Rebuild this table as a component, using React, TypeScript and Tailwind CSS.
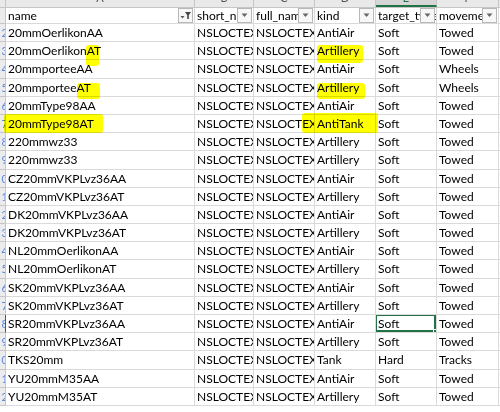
const rows: string[][] = [
  ['20mmOerlikonAA', 'AntiAir', 'Soft', 'Towed'],
  ['20mmOerlikonAT', 'Artillery', 'Soft', 'Towed'],
  ['20mmporteeAA', 'AntiAir', 'Soft', 'Wheels'],
  ['20mmporteeAT', 'Artillery', 'Soft', 'Wheels'],
  ['20mmType98AA', 'AntiAir', 'Soft', 'Towed'],
  ['20mmType98AT', 'AntiTank', 'Soft', 'Towed'],
  ['220mmwz33', 'Artillery', 'Soft', 'Towed'],
  ['220mmwz33', 'Artillery', 'Soft', 'Towed'],
  ['CZ20mmVKPLvz36AA', 'AntiAir', 'Soft', 'Towed'],
  ['CZ20mmVKPLvz36AT', 'Artillery', 'Soft', 'Towed'],
  ['DK20mmVKPLvz36AA', 'AntiAir', 'Soft', 'Towed'],
  ['DK20mmVKPLvz36AT', 'Artillery', 'Soft', 'Towed'],
  ['NL20mmOerlikonAA', 'AntiAir', 'Soft', 'Towed'],
  ['NL20mmOerlikonAT', 'Artillery', 'Soft', 'Towed'],
  ['SK20mmVKPLvz36AA', 'AntiAir', 'Soft', 'Towed'],
  ['SK20mmVKPLvz36AT', 'Artillery', 'Soft', 'Towed'],
  ['SR20mmVKPLvz36AA', 'AntiAir', 'Soft', 'Towed'],
  ['SR20mmVKPLvz36AT', 'Artillery', 'Soft', 'Towed'],
  ['TKS20mm', 'Tank', 'Hard', 'Tracks'],
  ['YU20mmM35AA', 'AntiAir', 'Soft', 'Towed'],
  ['YU20mmM35AT', 'Artillery', 'Soft', 'Towed'],
];

const rowNums = [2, 3, 4, 5, 6, 7, 8, 9, 10, 11, 12, 13, 14, 15, 16, 17, 18, 19, 20, 21, 22];

// hand-drawn highlighter marks over the sheet
const marks = [
  'left-[86px] top-[45px] w-[13px] h-[21px] rounded-[3px]',
  'left-[317px] top-[45px] w-[46px] h-[18px] rounded-[3px]',
  'left-[77px] top-[83px] w-[23px] h-[16px] rounded-[3px]',
  'left-[317px] top-[83px] w-[48px] h-[16px] rounded-[3px]',
  'left-[4px] top-[114px] w-[99px] h-[19px] rounded-[3px]',
  'left-[302px] top-[113px] w-[76px] h-[20px] rounded-[3px]',
];

const line = 'border-r border-b border-[#dadada]';
const colW = ['w-[189px]', 'w-[59px]', 'w-[61px]', 'w-[61px]', 'w-[61px]', 'w-[62px]'];

function FilterButton({ active }: { active?: boolean }) {
  return (
    <div className="absolute right-[1px] top-[0px] w-[15px] h-[15px] border border-[#b8b8b8] bg-[#f7f7f7] flex items-center justify-center">
      {active ? (
        <svg width="13" height="11" viewBox="0 0 13 11">
          <path d="M1.5 6 L5.5 6 L3.5 8.5 Z" fill="#555" />
          <path d="M6 2 H12 L9.8 5 V9 H8.2 V5 Z" fill="#444" />
        </svg>
      ) : (
        <svg width="7" height="5" viewBox="0 0 7 5">
          <path d="M0.5 0.5 H6.5 L3.5 4 Z" fill="#666" />
        </svg>
      )}
    </div>
  );
}

function HeadCell({ w, label, active }: { w: string; label: string; active?: boolean }) {
  return (
    <div className={`${w} ${line} relative h-full overflow-hidden whitespace-nowrap pl-[2px] leading-[16px]`}>
      {label}
      <FilterButton active={active} />
    </div>
  );
}

export default function App() {
  return (
    <div
      className="relative w-[500px] h-[412px] overflow-hidden bg-white text-[12px] text-black"
      style={{ fontFamily: 'Lato, "Open Sans", sans-serif' }}
    >
      {/* column letters strip, mostly scrolled out */}
      <div className="flex h-[7.5px] bg-[#e9e9e9] border-b border-[#c6c6c6] text-[11px] text-[#555]">
        <div className="w-[6px] border-r border-[#c6c6c6]" />
        {['A', 'B', 'C', 'D', 'E', 'F'].map((l, i) => (
          <div
            key={l}
            className={`${colW[i]} border-r border-[#c6c6c6] flex justify-center overflow-hidden ${l === 'E' ? 'text-[#217346] border-b-2 border-b-[#217346] bg-[#d6d6d6]' : ''}`}
          >
            <span className="leading-[11px] -mt-[8px]">{l}</span>
          </div>
        ))}
        <div className="flex-1" />
      </div>

      {/* header row */}
      <div className="flex h-[16.5px]">
        <div className="w-[6px] bg-[#ececec] border-r border-b border-[#c6c6c6]" />
        <HeadCell w={colW[0]} label="name" active />
        <HeadCell w={colW[1]} label="short_name" />
        <HeadCell w={colW[2]} label="full_name" />
        <HeadCell w={colW[3]} label="kind" />
        <HeadCell w={colW[4]} label="target_type" />
        <HeadCell w={colW[5]} label="movement" />
        <div className="flex-1 border-b border-[#dadada]" />
      </div>

      {rows.map((r, i) => {
        const selected = i === 16;
        return (
          <div key={i} className="flex h-[18.2px] leading-[18px]">
            <div
              className={`w-[6px] bg-[#ececec] border-b border-[#c6c6c6] border-r overflow-hidden flex justify-end text-[11px] text-[#5b86e0] ${selected ? 'border-r-[#217346] bg-[#d6d6d6]' : 'border-r-[#c6c6c6]'}`}
            >
              <span className="-mr-[3px]">{rowNums[i] % 10}</span>
            </div>
            <div className={`${colW[0]} ${line} pl-[2px] overflow-hidden whitespace-nowrap`}>{r[0]}</div>
            <div className={`${colW[1]} ${line} pl-[2px] overflow-hidden whitespace-nowrap`}>NSLOCTEXT</div>
            <div className={`${colW[2]} ${line} pl-[2px] overflow-hidden whitespace-nowrap`}>NSLOCTEXT</div>
            <div className={`${colW[3]} ${line} pl-[2px] overflow-hidden whitespace-nowrap`}>{r[1]}</div>
            <div className={`${colW[4]} ${line} pl-[2px] overflow-hidden whitespace-nowrap relative`}>
              {r[2]}
              {selected && (
                <div className="absolute -left-[1px] -top-[1px] right-0 bottom-0 border-2 border-[#217346]">
                  <div className="absolute -right-[4px] -bottom-[4px] w-[5px] h-[5px] bg-[#217346] border border-white" />
                </div>
              )}
            </div>
            <div className={`${colW[5]} ${line} pl-[2px] overflow-hidden whitespace-nowrap`}>{r[3]}</div>
            <div className="flex-1 border-b border-[#dadada]" />
          </div>
        );
      })}

      {marks.map((m, i) => (
        <div key={i} className={`absolute ${m} bg-[#ffff00] mix-blend-multiply pointer-events-none`} />
      ))}
    </div>
  );
}
